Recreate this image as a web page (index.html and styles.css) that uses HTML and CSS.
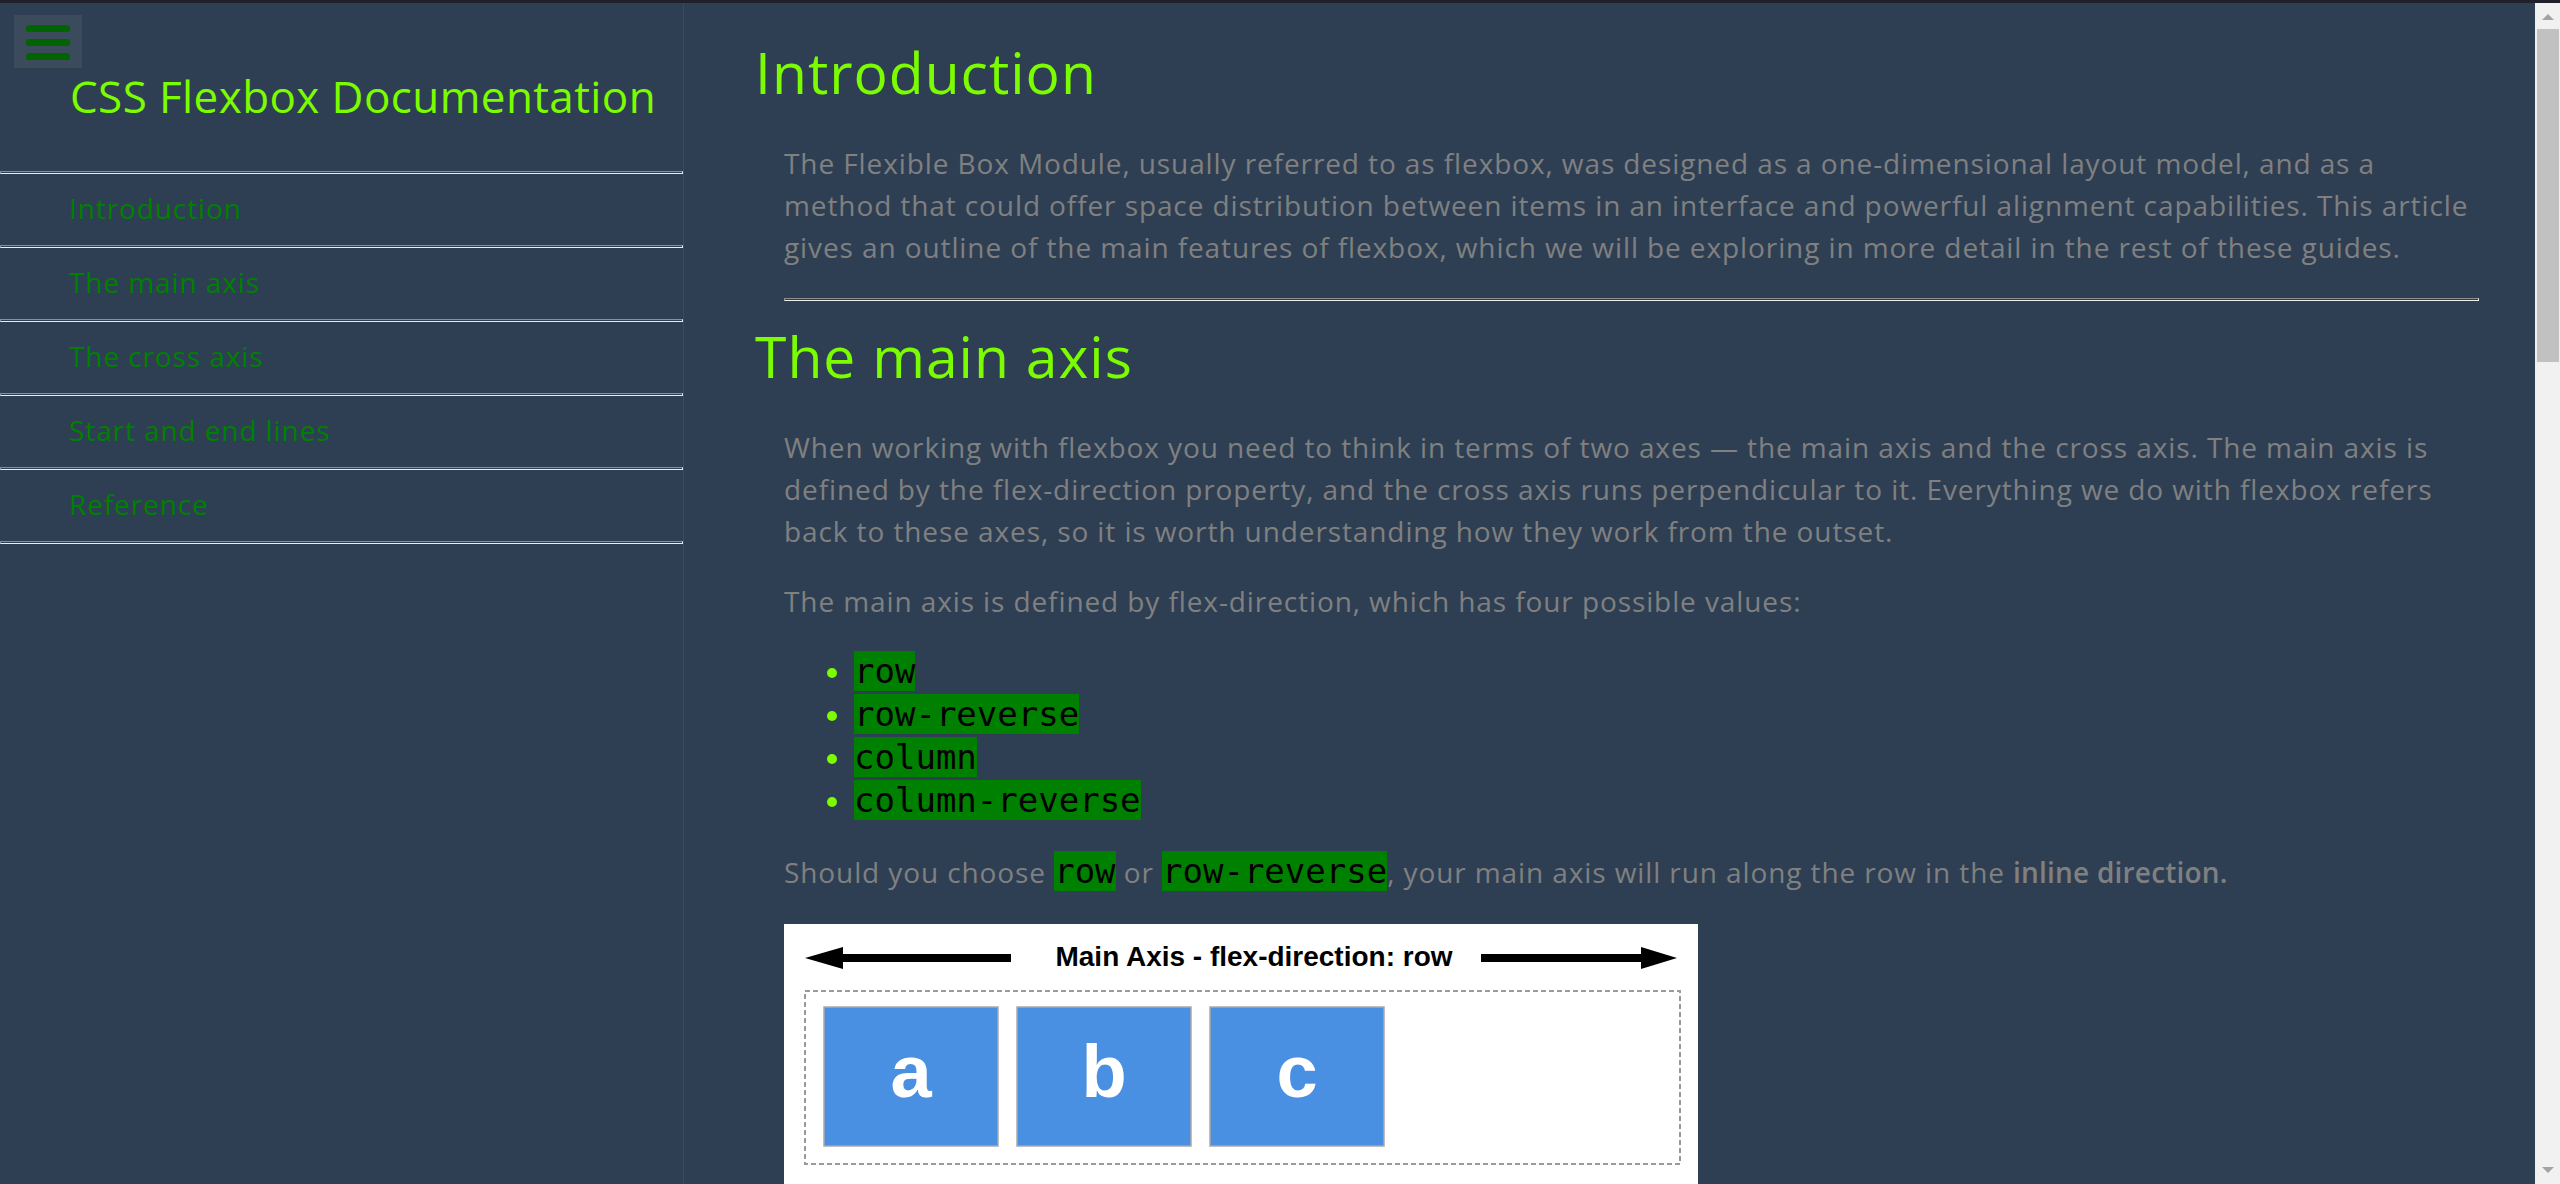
FILE: index.html
```html
<!DOCTYPE html>
<html lang="en">
<head>
<meta charset="utf-8">
<title>CSS Flexbox Documentation</title>
<link rel="stylesheet" href="styles.css">
</head>
<body>
<div class="topbar"></div>
<div class="layout">
  <nav class="sidebar" id="navbar">
    <header class="side-header">
      <button class="menu-btn" type="button" aria-label="Menu"><span class="bar"></span><span class="bar"></span><span class="bar"></span></button>
      <h2 class="site-title">CSS Flexbox Documentation</h2>
    </header>
    <hr class="rule">
    <a class="nav-link" href="#Introduction">Introduction</a>
    <hr class="rule">
    <a class="nav-link" href="#The_main_axis">The main axis</a>
    <hr class="rule">
    <a class="nav-link" href="#The_cross_axis">The cross axis</a>
    <hr class="rule">
    <a class="nav-link" href="#Start_and_end_lines">Start and end lines</a>
    <hr class="rule">
    <a class="nav-link" href="#Reference">Reference</a>
    <hr class="rule">
  </nav>
  <main class="main" id="main-doc">
    <div class="doc">
      <section class="main-section" id="Introduction">
        <h1 class="sec-title">Introduction</h1>
        <p>The Flexible Box Module, usually referred to as flexbox, was designed as a one-dimensional layout model, and as a method that could offer space distribution between items in an interface and powerful alignment capabilities. This article gives an outline of the main features of flexbox, which we will be exploring in more detail in the rest of these guides.</p>
        <hr class="rule rule-main">
      </section>
      <section class="main-section" id="The_main_axis">
        <h1 class="sec-title">The main axis</h1>
        <p>When working with flexbox you need to think in terms of two axes — the main axis and the cross axis. The main axis is defined by the flex-direction property, and the cross axis runs perpendicular to it. Everything we do with flexbox refers back to these axes, so it is worth understanding how they work from the outset.</p>
        <p>The main axis is defined by flex-direction, which has four possible values:</p>
        <ul class="values">
          <li><code>row</code></li>
          <li><code>row-reverse</code></li>
          <li><code>column</code></li>
          <li><code>column-reverse</code></li>
        </ul>
        <p>Should you choose <code>row</code> or <code>row-reverse</code>, your main axis will run along the row in the <strong>inline direction.</strong></p>
        <svg class="diagram" viewBox="0 0 914 270" role="img" aria-label="Main axis diagram">
          <rect width="914" height="270" fill="#ffffff"/>
          <polygon points="21,34 59,23 59,45" fill="#000"/>
          <rect x="56" y="30" width="171" height="8" fill="#000"/>
          <text x="470" y="42" text-anchor="middle" font-family="'Liberation Sans', Arial, sans-serif" font-weight="700" font-size="28" textLength="397" lengthAdjust="spacingAndGlyphs" fill="#000">Main Axis - flex-direction: row</text>
          <rect x="697" y="30" width="162" height="8" fill="#000"/>
          <polygon points="893,34 857,23 857,45" fill="#000"/>
          <rect x="21" y="67" width="875" height="173" fill="none" stroke="#9a9a9a" stroke-width="2" stroke-dasharray="5 3"/>
          <rect x="40" y="83" width="174" height="139" fill="#4a90e2" stroke="#a9a9a9" stroke-width="1.5"/>
          <rect x="233" y="83" width="174" height="139" fill="#4a90e2" stroke="#a9a9a9" stroke-width="1.5"/>
          <rect x="426" y="83" width="174" height="139" fill="#4a90e2" stroke="#a9a9a9" stroke-width="1.5"/>
          <text x="127" y="173" text-anchor="middle" font-family="'Liberation Sans', Arial, sans-serif" font-weight="700" font-size="74" fill="#fff">a</text>
          <text x="320" y="173" text-anchor="middle" font-family="'Liberation Sans', Arial, sans-serif" font-weight="700" font-size="74" fill="#fff">b</text>
          <text x="513" y="173" text-anchor="middle" font-family="'Liberation Sans', Arial, sans-serif" font-weight="700" font-size="74" fill="#fff">c</text>
        </svg>
        <p>Choose <code>column</code> or <code>column-reverse</code> and your main axis will run from the top of the page to the bottom — in the <strong>block direction.</strong></p>
        <hr class="rule rule-main">
      </section>
      <section class="main-section" id="The_cross_axis">
        <h1 class="sec-title">The cross axis</h1>
        <p>The cross axis runs perpendicular to the main axis, therefore if your flex-direction (main axis) is set to row or row-reverse the cross axis runs down the columns.</p>
        <p>If your main axis is column or column-reverse then the cross axis runs along the rows.</p>
        <hr class="rule rule-main">
      </section>
      <section class="main-section" id="Start_and_end_lines">
        <h1 class="sec-title">Start and end lines</h1>
        <p>Another vital area of understanding is how flexbox makes no assumption about the writing mode of the document.</p>
        <hr class="rule rule-main">
      </section>
      <section class="main-section" id="Reference">
        <h1 class="sec-title">Reference</h1>
        <p>All the documentation in this page is taken from MDN.</p>
      </section>
    </div>
  </main>
  <div class="scrollbar" aria-hidden="true">
    <div class="sb-btn sb-up"><span class="sb-arrow-up"></span></div>
    <div class="sb-track"><div class="sb-thumb"></div></div>
    <div class="sb-btn sb-down"><span class="sb-arrow-down"></span></div>
  </div>
</div>
</body>
</html>
```
FILE: styles.css
```css
html, body {
  margin: 0;
  height: 100%;
}

body {
  display: flex;
  flex-direction: column;
  overflow: hidden;
  background: #2e3f54;
  font-family: "Open Sans", "Liberation Sans", sans-serif;
}

.topbar {
  flex: none;
  height: 3px;
  background: #1f2029;
}

.layout {
  flex: 1;
  display: flex;
  min-height: 0;
}

/* Sidebar */
.sidebar {
  flex: none;
  width: 683px;
  border-right: 1px solid #0b730b;
  display: flex;
  flex-direction: column;
}

.side-header {
  padding: 12px 0 48px;
}

.menu-btn {
  display: flex;
  flex-direction: column;
  gap: 7px;
  width: 68px;
  height: 53px;
  margin: 0 0 0 14px;
  padding: 10px 12px 0;
  box-sizing: border-box;
  background: #3b4b5b;
  border: 0;
  cursor: pointer;
}

.bar {
  display: block;
  height: 7px;
  border-radius: 3px;
  background: #006400;
}

.site-title {
  margin: 2px 0 0 70px;
  font-size: 44px;
  line-height: 1.2;
  font-weight: 400;
  letter-spacing: 0.4px;
  color: #7cfc00;
}

.rule {
  margin: 0;
  height: 1px;
  border: 1px solid;
  border-color: #8e8e8e #ececec #ececec #8e8e8e;
}

.nav-link {
  display: block;
  padding: 0 0 3px 69px;
  font-size: 28px;
  line-height: 68px;
  letter-spacing: 0.9px;
  color: #008000;
  text-decoration: none;
}

/* Main document */
.main {
  flex: 1;
  min-width: 0;
  overflow: hidden;
}

.doc {
  padding: 14px 56px 60px 68px;
}

.sec-title {
  margin: 22px 0 36px 3px;
  font-size: 57px;
  line-height: 67px;
  font-weight: 400;
  letter-spacing: 1px;
  color: #7cfc00;
}

.doc p {
  margin: 28px 0 28px 32px;
  font-size: 28px;
  line-height: 42px;
  letter-spacing: 0.9px;
  color: #808080;
}

.doc strong {
  font-weight: 600;
  letter-spacing: 0.2px;
}

.rule-main {
  margin: 30px 0 0 32px;
}

.values {
  margin: 28px 0 28px 32px;
  padding-left: 70px;
  font-size: 28px;
  line-height: 42px;
  color: #7cfc00;
}

code {
  font-family: "DejaVu Sans Mono", monospace;
  font-size: 34px;
  letter-spacing: 0;
  background: #008000;
  color: #000;
}

.diagram {
  display: block;
  width: 914px;
  height: 270px;
  margin: 31px 0 28px 32px;
}

/* Window scrollbar */
.scrollbar {
  flex: none;
  width: 25px;
  display: flex;
  flex-direction: column;
  background: #f1f1f1;
}

.sb-btn {
  flex: none;
  height: 26px;
  box-sizing: border-box;
  padding-left: 7px;
}

.sb-up {
  padding-top: 11px;
}

.sb-down {
  padding-top: 9px;
}

.sb-arrow-up,
.sb-arrow-down {
  display: block;
  width: 0;
  height: 0;
  border-left: 6px solid transparent;
  border-right: 6px solid transparent;
}

.sb-arrow-up {
  border-bottom: 6px solid #a3a3a3;
}

.sb-arrow-down {
  border-top: 6px solid #a3a3a3;
}

.sb-track {
  flex: 1;
}

.sb-thumb {
  height: 333px;
  margin: 0 1px 0 2px;
  background: #c1c1c1;
}
```
